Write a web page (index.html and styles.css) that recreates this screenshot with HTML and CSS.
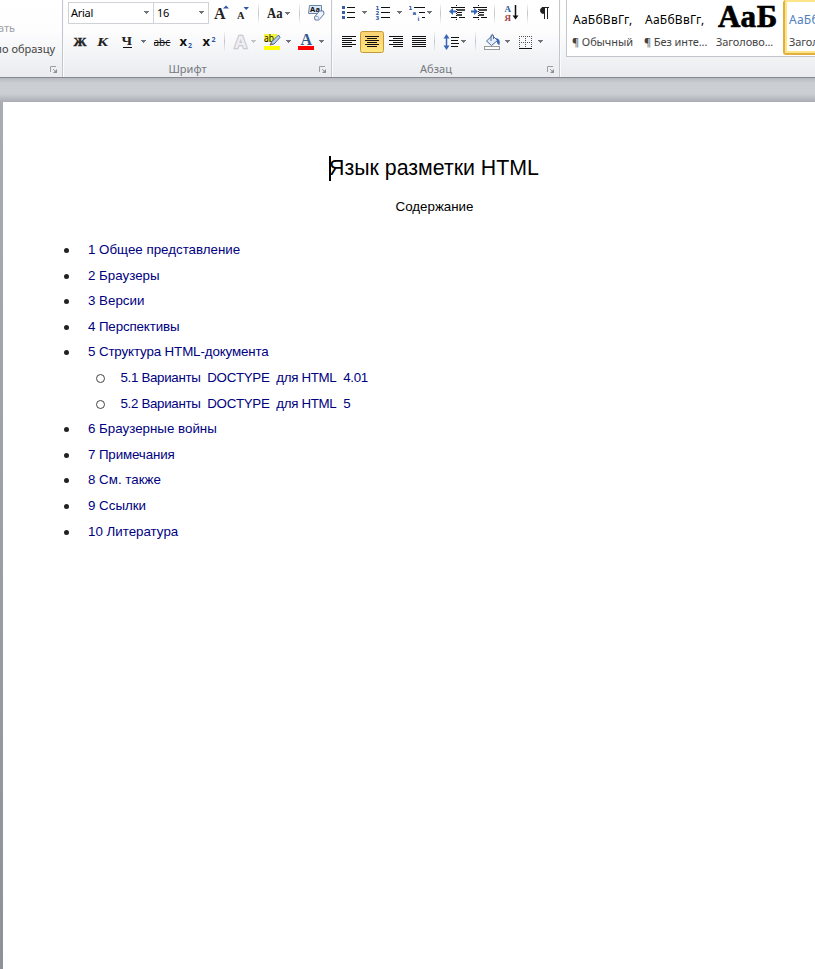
FILE: index.html
```html
<!DOCTYPE html>
<html lang="ru">
<head>
<meta charset="utf-8">
<title>Язык разметки HTML</title>
<link rel="stylesheet" href="styles.css">
</head>
<body>
<svg class="defs" aria-hidden="true">
  <defs>
    <linearGradient id="gsep" x1="0" y1="0" x2="0" y2="1"><stop offset="0" stop-color="#d5d9de" stop-opacity=".3"/><stop offset=".5" stop-color="#bfc4ca"/><stop offset="1" stop-color="#d5d9de" stop-opacity=".3"/></linearGradient>
    <linearGradient id="gbtn" x1="0" y1="0" x2="0" y2="1"><stop offset="0" stop-color="#fbd172"/><stop offset=".4" stop-color="#fdd873"/><stop offset="1" stop-color="#ffe882"/></linearGradient>
    <path id="dd" d="M0 0h5v1h-1v1h-1v1h-1v-1h-1v-1h-1z" fill="#6f747b"/>
    <rect id="sep" width="1" height="19" fill="url(#gsep)"/>
  </defs>
</svg>

<header class="ribbon">
  <section class="group clipboard">
    <div class="row clip-dim">ать</div>
    <div class="row clip-text">по образцу</div>
    <div class="caption"><span class="caption-text"></span><svg class="launcher" viewBox="0 0 8 8"><path d="M.5 6V.5H6" fill="none" stroke="#9a9ea5"/><path d="M3 3l3 3" stroke="#9a9ea5"/><path d="M7 3v4H3z" fill="#8b9097"/></svg></div>
  </section>

  <section class="group font">
    <div class="row">
      <div class="combo family">Arial<svg class="arrow" viewBox="0 0 5 3"><use href="#dd"/></svg></div>
      <div class="combo size">16<svg class="arrow" viewBox="0 0 5 3"><use href="#dd"/></svg></div>
      <svg class="icons" width="122" height="28" viewBox="209 0 122 28">
        <text class="serif" x="214" y="19" font-size="16">A</text>
        <path d="M223 8.500l3-3 3 3z" fill="#2f56a5"/>
        <text class="serif" x="237" y="19" font-size="10.500">A</text>
        <path d="M243.500 7h5.500l-2.750 3z" fill="#2f56a5"/>
        <use href="#sep" x="258" y="4"/>
        <text class="serif" x="267" y="18" font-size="14" textLength="15.500" lengthAdjust="spacingAndGlyphs">Aa</text>
        <use href="#dd" x="285" y="12"/>
        <use href="#sep" x="299" y="4"/>
        <path d="M309.500 5.500h12v8h-13z" fill="#dce8f7" stroke="#6c87ad"/>
        <text class="sans" x="310" y="12" font-size="7.500" font-weight="bold" textLength="10">Aa</text>
        <path d="M314.500 17l5-6 4 0 .5 3-5 6-4 0z" fill="#eef3fb" stroke="#617aa6"/>
        <path d="M314.500 16.500l3.500 0 1.500 3.500" fill="none" stroke="#9aaccb"/>
      </svg>
    </div>
    <div class="row">
      <svg class="icons" width="267" height="30" viewBox="64 28 267 30">
        <text class="serif heavy" x="73.500" y="46" font-size="13.500" textLength="13" lengthAdjust="spacingAndGlyphs">Ж</text>
        <text class="serif" x="97" y="46" font-size="13.500" font-style="italic" textLength="11" lengthAdjust="spacingAndGlyphs">К</text>
        <text class="serif" x="121.500" y="45" font-size="12.500" textLength="10.500" lengthAdjust="spacingAndGlyphs">Ч</text>
        <path d="M123 47.500h9" stroke="#111"/>
        <use href="#dd" x="141" y="40"/>
        <text class="sans" x="153.500" y="46" font-size="11" textLength="16.500" lengthAdjust="spacingAndGlyphs">abc</text>
        <path d="M154 42.500h16.500" stroke="#111"/>
        <text class="sans" x="179.500" y="46" font-size="13" font-weight="bold" textLength="8.500">x</text>
        <text class="sans blue" x="188" y="47.500" font-size="7" font-weight="bold">2</text>
        <text class="sans" x="202.500" y="46" font-size="13" font-weight="bold" textLength="8.500">x</text>
        <text class="sans blue" x="211.500" y="41.500" font-size="7" font-weight="bold">2</text>
        <use href="#sep" x="224" y="32"/>
        <text x="234.500" y="48" font-size="17" font-family="Liberation Sans" font-weight="bold" fill="#f0f0f4" stroke="#cacad0" stroke-width="2.500" paint-order="stroke">A</text>
        <use href="#dd" x="251" y="40" opacity=".4"/>
        <path d="M264 34h13v8h-13z" fill="#f4f43b"/>
        <text class="sans" x="264" y="42" font-size="10.500" textLength="10" lengthAdjust="spacingAndGlyphs">ab</text>
        <path d="M278.500 35l-7 7-1.500 3 4-1 6-6.500z" fill="#b9cfee" stroke="#4e6a99"/><path d="M270 45l3-1-2-1.500z" fill="#b37b24"/>
        <path d="M264 46h16v4h-16z" fill="#ff0"/>
        <use href="#dd" x="286" y="40"/>
        <text class="serif navy" x="300.500" y="45" font-size="16">A</text>
        <path d="M298 46h16v4h-16z" fill="#f00"/>
        <use href="#dd" x="319" y="40"/>
      </svg>
    </div>
    <div class="caption"><span class="caption-text">Шрифт</span><svg class="launcher" viewBox="0 0 8 8"><path d="M.5 6V.5H6" fill="none" stroke="#9a9ea5"/><path d="M3 3l3 3" stroke="#9a9ea5"/><path d="M7 3v4H3z" fill="#8b9097"/></svg></div>
  </section>

  <section class="group para">
    <div class="row">
      <svg class="icons" width="226" height="28" viewBox="333 0 226 28">
        <path d="M342 6h3v3h-3zM342 11h3v3h-3zM342 16h3v3h-3z" fill="#3a5da8"/>
        <path d="M347 7.500h8M347 12.500h8M347 17.500h8" stroke="#111"/>
        <use href="#dd" x="362" y="11"/>
        <g class="blue mini"><text x="375.500" y="9.500">1</text><text x="375.500" y="14.700">2</text><text x="375.500" y="19.900">3</text></g>
        <path d="M381 7.500h9M381 12.500h9M381 17.500h9" stroke="#111"/>
        <use href="#dd" x="397" y="11"/>
        <g class="blue mini"><text x="408.500" y="9.500">1</text><text x="412.500" y="15">a</text><text x="417.500" y="20.500">i</text></g>
        <path d="M414 7.500h11M419 12.500h6M422 17.500h3" stroke="#111"/>
        <use href="#dd" x="427" y="11"/>
        <use href="#sep" x="440" y="4"/>
        <g id="indent"><path d="M451 7.500h14M457 12.500h5M451 17.500h6" stroke="#111"/><path d="M457 10h8M457 15h5" stroke="#111" stroke-width="1.500"/><path d="M459 17.500h6" stroke="#111"/><path d="M456.500 5v16" stroke="#111" stroke-dasharray="1 1"/></g>
        <path d="M449 11.500l4-3.500v2.500h3v2h-3v2.500z" fill="#3a66b5"/>
        <use href="#indent" x="22"/>
        <path d="M478 11.500l-4-3.500v2.500h-3v2h3v2.500z" fill="#3a66b5"/>
        <use href="#sep" x="494" y="4"/>
        <text class="serif blue" x="504.500" y="12" font-size="9">A</text>
        <text class="serif red" x="504.500" y="20.500" font-size="9">Я</text>
        <path d="M515.500 5v12" stroke="#111" stroke-width="1.500"/><path d="M512.500 15.500h6l-3 4z" fill="#111"/>
        <use href="#sep" x="527" y="4"/>
        <path d="M549 7.500h-7M544.500 7v12M547.500 7v12" stroke="#222"/><path d="M543.500 7.500a3 3 0 0 0 0 6z" fill="#222" stroke="#222"/>
      </svg>
    </div>
    <div class="row">
      <svg class="icons" width="226" height="30" viewBox="333 28 226 30">
        <g stroke="#111">
          <path d="M342 36.500h14M342 38.500h10M342 40.500h14M342 42.500h10M342 44.500h14M342 46.500h10"/>
          <rect x="360.500" y="31.500" width="23" height="21" rx="2" fill="url(#gbtn)" stroke="#c29a3a"/>
          <path d="M365 36.500h14M367 38.500h10M365 40.500h14M367 42.500h10M365 44.500h14M367 46.500h10"/>
          <path d="M389 36.500h14M393 38.500h10M389 40.500h14M393 42.500h10M389 44.500h14M393 46.500h10"/>
          <path d="M412 36.500h14M412 38.500h14M412 40.500h14M412 42.500h14M412 44.500h14M412 46.500h14"/>
        </g>
        <use href="#sep" x="434" y="32"/>
        <path d="M446.500 37v10" stroke="#3a66b5" stroke-width="1.500"/><path d="M443.500 38.500l3-4.500 3 4.500zM443.500 45.500h6l-3 4.500z" fill="#3a66b5"/>
        <path d="M451 37.500h8M451 40.500h7M451 43.500h8M451 46.500h7" stroke="#111"/>
        <use href="#dd" x="461" y="40"/>
        <use href="#sep" x="475" y="32"/>
        <path d="M486.500 41l6-5.500 5 5-6 5z" fill="#e4edf9" stroke="#4d6a9b"/><path d="M491 41v-5q1.500-3.500 2.500 0v3" fill="none" stroke="#4d6a9b"/><path d="M496 38q5 1 3.500 7q-3-1-2.500-4z" fill="#3a66b5"/>
        <rect x="484.500" y="46.500" width="15" height="3" fill="#fff" stroke="#999"/>
        <use href="#dd" x="505" y="40"/>
        <g stroke="#555" stroke-dasharray="1 1"><path d="M519 36.500h13M519 42.500h13M519.500 36v12M525.500 36v12M531.500 36v12"/></g>
        <path d="M519 48.500h13" stroke="#111"/>
        <use href="#dd" x="538" y="40"/>
      </svg>
    </div>
    <div class="caption"><span class="caption-text">Абзац</span><svg class="launcher" viewBox="0 0 8 8"><path d="M.5 6V.5H6" fill="none" stroke="#9a9ea5"/><path d="M3 3l3 3" stroke="#9a9ea5"/><path d="M7 3v4H3z" fill="#8b9097"/></svg></div>
  </section>

  <section class="group styles">
    <div class="gallery">
      <div class="style"><span class="sample">АаБбВвГг,</span><span class="name">¶ Обычный</span></div>
      <div class="style"><span class="sample">АаБбВвГг,</span><span class="name">¶ Без инте...</span></div>
      <div class="style"><span class="sample big">АаБ</span><span class="name">Заголово...</span></div>
      <div class="style selected"><span class="sample">АаБбВ</span><span class="name">Заголово...</span></div>
    </div>
  </section>
</header>

<main class="workspace">
  <article class="page">
    <h1><span class="caret"></span>Язык разметки HTML</h1>
    <p class="subtitle">Содержание</p>
    <ul class="toc">
      <li><a>1 Общее представление</a></li>
      <li><a>2 Браузеры</a></li>
      <li><a>3 Версии</a></li>
      <li><a class="narrow">4 Перспективы</a></li>
      <li><a class="narrow">5 Структура HTML-документа</a></li>
      <li class="sub"><a>5.1 Варианты&nbsp; DOCTYPE&nbsp; для HTML&nbsp; 4.01</a></li>
      <li class="sub"><a>5.2 Варианты&nbsp; DOCTYPE&nbsp; для HTML&nbsp; 5</a></li>
      <li><a>6 Браузерные войны</a></li>
      <li><a class="narrow">7 Примечания</a></li>
      <li><a>8 См. также</a></li>
      <li><a>9 Ссылки</a></li>
      <li><a>10 Литература</a></li>
    </ul>
  </article>
</main>
</body>
</html>
```
FILE: styles.css
```css
* { box-sizing: border-box; }
html, body { height: 100%; margin: 0; }
body { display: flex; flex-direction: column; overflow: hidden; background: #cbced3; font-family: "Liberation Sans", Arial, sans-serif; color: #000; }
.defs { position: absolute; width: 0; height: 0; }

.ribbon { flex: none; display: flex; height: 78px; overflow: hidden; background: linear-gradient(#fff 0, #fdfdfe 40%, #e9ebee 100%); border-bottom: 1px solid #85898f; font-family: "Noto Sans", sans-serif; font-size: 11px; }
.group { flex: none; display: flex; flex-direction: column; height: 77px; border-right: 1px solid #c3c7cd; box-shadow: 1px 0 #fafbfc; }
.clipboard { width: 63px; }
.font { width: 269px; padding-left: 1px; }
.para { width: 228px; padding-left: 1px; }
.styles { width: 400px; border: 0; padding-left: 6px; }
.row { display: flex; height: 28px; }
.row + .row { height: 30px; }
.icons { display: block; flex: none; }
.clipboard .row { height: 40px; white-space: nowrap; align-items: center; justify-content: flex-end; }
.clipboard .clip-dim { padding: 14px 47px 0 0; color: #9c9fa4; }
.clipboard .clip-text { height: 18px; padding: 0 7px 1px 0; color: #444; }
.caption { display: flex; height: 19px; align-items: center; padding: 3px 4px 0 0; color: #74787f; }
.caption-text { flex: 1; text-align: center; padding-right: 8px; line-height: 16px; }
.launcher { width: 8px; height: 8px; margin-top: 1px; }

.combo { display: flex; align-items: center; justify-content: space-between; height: 22px; margin-top: 2px; border: 1px solid #cfd2d7; background: #fff; padding: 0 4px 1px 2px; letter-spacing: -.3px; }
.family { width: 86px; margin-left: 4px; }
.size { width: 56px; margin-left: -1px; padding-left: 3px; }
.arrow { width: 5px; height: 3px; }

.serif { font-family: "Liberation Serif", serif; font-weight: bold; fill: #222; }
.heavy { stroke: #222; stroke-width: .4px; }
.sans { font-family: "Noto Sans", sans-serif; fill: #111; }
.blue { fill: #2f56a5; }
.navy { fill: #34568f; }
.red { fill: #a54040; }
.mini { font: bold 5.5px "DejaVu Sans", sans-serif; }

.gallery { display: flex; height: 57px; border: 1px solid #c3c7cd; border-top: 0; background: #fff; }
.style { display: flex; flex-direction: column; width: 72px; height: 56px; flex: none; padding: 0 4px; white-space: nowrap; overflow: hidden; color: #444; }
.sample { height: 34px; padding: 11px 0 0 2px; font-size: 12px; line-height: 18px; letter-spacing: .25px; color: #000; }
.name { line-height: 16px; padding-left: 1px; letter-spacing: -.1px; }
.style .big { font: bold 31px/34px "Liberation Serif", serif; padding: 0 0 0 3px; letter-spacing: .6px; -webkit-text-stroke: .7px #000; }
.selected { width: 76px; height: 55px; border: 2px solid #e0b13f; border-top: 0; border-radius: 3px; box-shadow: inset 0 0 0 2px #ffe58a; padding-left: 3px; }
.selected .sample { color: #4f81bd; padding-left: 1px; }

.workspace { flex: 1; display: flex; padding: 24px 0 0 3px; background: linear-gradient(#b6b9bf 0, #cbced3 5px, #cbced3 16px, #a9acb2 24px, #8e9197 100%); }
.page { flex: 1; background: #fff; padding: 52px 0 0; }
h1 { display: flex; justify-content: center; margin: 0; padding-left: 50px; font-weight: normal; font-size: 21.330px; line-height: 28px; }
.caret { width: 2px; height: 25px; background: #000; margin: 2px -2px 0 0; }
.subtitle { margin: 16px 0 0; padding-left: 51px; text-align: center; font-size: 13.330px; line-height: 18px; }
.toc { list-style: none; margin: 20.600px 0 0; padding: 0 0 0 61px; }
.toc li { display: flex; align-items: center; height: 25.620px; font-size: 13.330px; white-space: pre; }
.toc a { color: #00007f; }
.toc .narrow { letter-spacing: -.12px; }
.toc li::before { content: ""; width: 5px; height: 5px; border-radius: 50%; background: #222; margin: 2px 19px 0 0; }
.toc .sub { padding-left: 32px; }
.toc .sub::before { width: 7px; height: 7px; background: none; border: 1px solid #444; margin-right: 17px; }
.toc .sub a { letter-spacing: -.32px; margin-left: -1.500px; }
```
